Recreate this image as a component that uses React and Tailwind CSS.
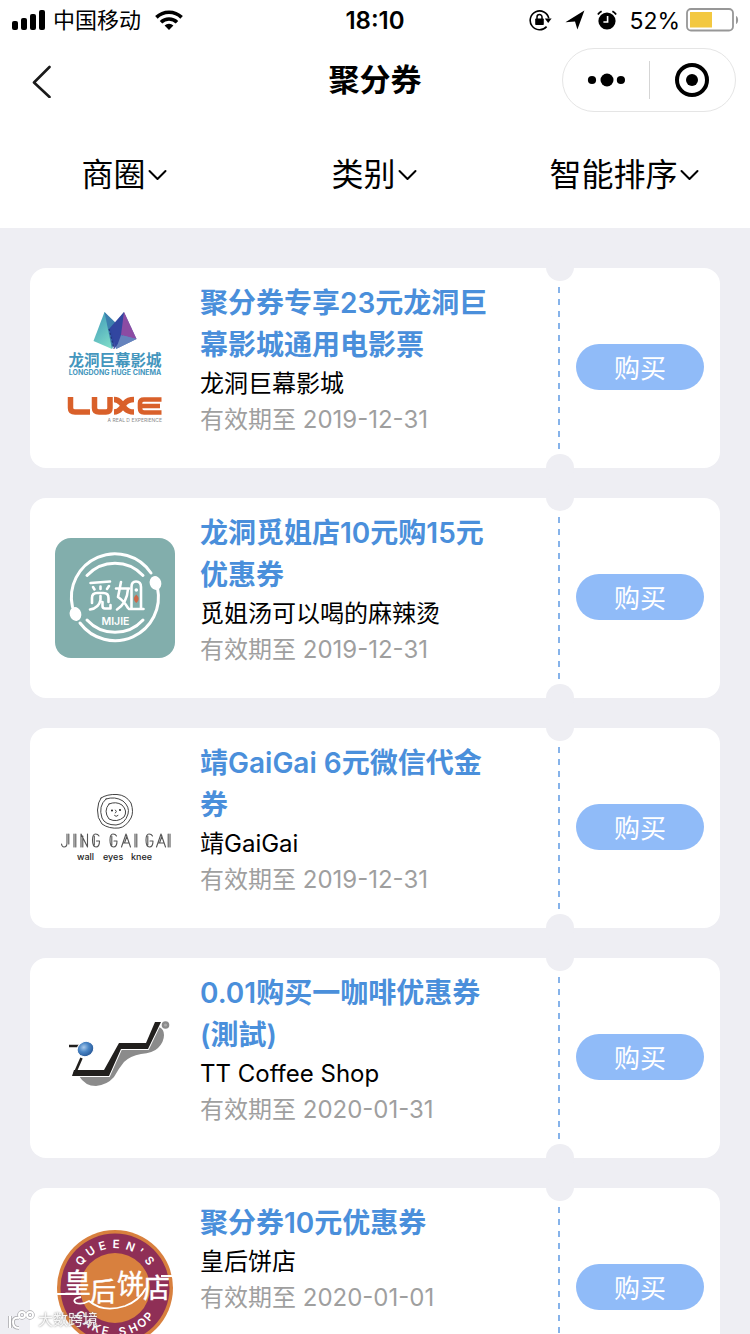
import React from "react";

function SignalIcon() {
  return (
    <svg width="34" height="20" viewBox="0 0 34 20" aria-hidden="true">
      <rect x="0" y="11" width="6" height="9" rx="2" />
      <rect x="9" y="8" width="6" height="12" rx="2" />
      <rect x="18" y="4" width="6" height="16" rx="2" />
      <rect x="27" y="0" width="6" height="20" rx="2" />
    </svg>
  );
}

function WifiIcon() {
  return (
    <svg width="28" height="20" viewBox="0 0 28 20" aria-hidden="true">
      <g fill="none" stroke="#000" strokeWidth="3.6">
        <path d="M1.4 7.4 A18 18 0 0 1 26.6 7.4" />
        <path d="M6 12.2 A11.5 11.5 0 0 1 22 12.2" />
      </g>
      <path d="M9.6 15.6 A6.2 6.2 0 0 1 18.4 15.6 L14 20 Z" />
    </svg>
  );
}

function RotationLockIcon() {
  return (
    <svg width="24" height="22" viewBox="0 0 24 22" aria-hidden="true">
      <path d="M17.6 17.6 A9.4 9.4 0 1 1 19.8 9.4" fill="none" stroke="#000" strokeWidth="1.6" />
      <path d="M15.8 9.4 H22.6 L19.2 14 Z" />
      <rect x="6.2" y="9.4" width="8.6" height="6.6" rx="0.8" />
      <path d="M8 10 V8 A2.5 2.5 0 0 1 13 8 V10" fill="none" stroke="#000" strokeWidth="1.5" />
    </svg>
  );
}

function LocationIcon() {
  return (
    <svg width="20" height="20" viewBox="0 0 20 20" aria-hidden="true">
      <path d="M19.4 0.6 L0.4 12.2 L10 11.6 L12.4 19.4 Z" />
    </svg>
  );
}

function AlarmIcon() {
  return (
    <svg width="20" height="20" viewBox="0 0 20 20" aria-hidden="true">
      <circle cx="10" cy="11" r="8.6" />
      <path d="M0.9 4.6 A11 11 0 0 1 4.6 1.3 M15.4 1.3 A11 11 0 0 1 19.1 4.6" fill="none" stroke="#000" strokeWidth="1.8" />
      <path d="M10.6 6 V12 H6.4" fill="none" stroke="#fff" strokeWidth="1.6" />
    </svg>
  );
}

function BatteryIcon() {
  return (
    <svg width="54" height="24" viewBox="0 0 54 24" aria-hidden="true">
      <rect x="1" y="1" width="46" height="21.5" rx="4" fill="#fff" stroke="#979797" strokeWidth="1.8" />
      <rect x="4" y="4" width="22" height="15.5" fill="#f3c840" />
      <path d="M50 8 C52.8 8.6 52.8 15.4 50 16 Z" fill="#979797" />
    </svg>
  );
}

function StatusBar() {
  return (
    <div className="grid h-10 grid-cols-[1fr_auto_1fr] items-center">
      <div className="flex items-center pl-3">
        <SignalIcon />
        <span className="mr-3.5 ml-[7px] text-[22px] leading-7">中国移动</span>
        <WifiIcon />
      </div>
      <span className="pt-0.5 text-2xl leading-7 font-semibold">18:10</span>
      <div className="flex items-center justify-end gap-3 pr-2.5">
        <RotationLockIcon />
        <LocationIcon />
        <AlarmIcon />
        <div className="flex items-center gap-1.5">
          <span className="pt-0.5 text-[23px] leading-7">52%</span>
          <BatteryIcon />
        </div>
      </div>
    </div>
  );
}

function NavBar() {
  return (
    <div className="grid h-20 grid-cols-[1fr_auto_1fr] items-center">
      <button type="button" aria-label="返回" className="ml-8 w-5">
        <svg width="20" height="36" viewBox="0 0 20 36" fill="none" aria-hidden="true">
          <path d="M17.5 6 L2 21.500 L17.5 36" transform="translate(0 -1)" stroke="#1a1a1a" strokeWidth="2.6" strokeLinecap="round" strokeLinejoin="round" />
        </svg>
      </button>
      <h1 className="text-[31px] leading-10 font-bold">聚分券</h1>
      <div className="mr-3.5 flex h-16 w-[174px] items-center justify-self-end rounded-full border border-[#e5e5e5]">
        <button type="button" aria-label="更多" className="flex flex-1 justify-center">
          <svg width="38" height="14" viewBox="0 0 38 14" aria-hidden="true">
            <circle cx="5" cy="7" r="4.1" />
            <circle cx="20" cy="7" r="6.5" />
            <circle cx="33.900" cy="7" r="4.1" />
          </svg>
        </button>
        <span className="h-[38px] w-px bg-[#d5d5d5]" />
        <button type="button" aria-label="关闭" className="flex flex-1 justify-center">
          <svg width="36" height="36" viewBox="0 0 36 36" aria-hidden="true">
            <circle cx="18" cy="18" r="15" fill="none" stroke="#000" strokeWidth="4" />
            <circle cx="18" cy="18" r="6" />
          </svg>
        </button>
      </div>
    </div>
  );
}

function Filters() {
  return (
    <div className="grid h-[108px] grid-cols-3 pt-0.5">
      {["商圈", "类别", "智能排序"].map((label) => (
        <button key={label} type="button" className="flex items-center justify-center gap-0.5 pr-0.5 text-[32px]">
          {label}
          <svg width="19" height="12" viewBox="0 0 19 12" fill="none" aria-hidden="true">
            <path d="M1.500 2 L9.500 10 L17.500 2" stroke="#000" strokeWidth="2" strokeLinecap="round" strokeLinejoin="round" />
          </svg>
        </button>
      ))}
    </div>
  );
}

function CinemaLogo() {
  return (
    <svg width="120" height="120" viewBox="0 10 120 120" role="img" aria-label="龙洞巨幕影城">
      <defs>
        <linearGradient id="peakLeft" x1="0" y1="0" x2="0.6" y2="1">
          <stop offset="0" stopColor="#3c96b8" />
          <stop offset="1" stopColor="#7fdcc8" />
        </linearGradient>
      </defs>
      <path d="M49.5 14 L38.5 43 L57 51 L63 30 Z" fill="url(#peakLeft)" />
      <path d="M49.5 14 L64 28 L57 51 Z" fill="#3d7fae" />
      <path d="M69 14 L81.5 41 L61 51 L56 30 Z" fill="#6583bd" />
      <path d="M69 14 L54 31 L59 51 L68 40 Z" fill="#2c3f9c" opacity="0.9" />
      <path d="M69 14 L66 37 L81.5 41 Z" fill="#8c4ba3" />
      <path d="M66 37 L81.5 41 L61 51 Z" fill="#6583bd" />
      <path d="M54 31 L59 51" stroke="#1f2d70" strokeDasharray="2 2" />
      <text x="60" y="68" textAnchor="middle" fontSize="15.5" fontWeight="700" fill="#4496bd">龙洞巨幕影城</text>
      <text x="60" y="77" textAnchor="middle" fontSize="7" fontWeight="700" fill="#4496bd">LONGDONG HUGE CINEMA</text>
      <g fill="none" stroke="#d9602a" strokeWidth="5.5" strokeLinejoin="round">
        <path d="M15.500 99 V110 Q15.500 114 20 114 H35" />
        <path d="M39.500 99 V110 Q39.500 114 44 114 H51 Q55 114 55 110 V99" />
        <path d="M59 101.500 Q63 101.500 66 105 L70 110.500 Q73 114 79 114 M59 114 Q63 114 66 110.500 L70 105 Q73 101.500 79 101.500" />
        <path d="M106.500 101.500 H89 Q85 101.500 85 105 V110 Q85 114.500 89 114.500 H106.500 M85 108 H105" strokeWidth="4.6" />
      </g>
      <text x="107" y="124" textAnchor="end" fontSize="5" fill="#8a8a8a">A REAL D EXPERIENCE</text>
    </svg>
  );
}

function MijieLogo() {
  return (
    <svg width="120" height="120" viewBox="0 0 120 120" role="img" aria-label="觅姐 MIJIE" className="rounded-2xl bg-[#82aeac]">
      <g fill="none" stroke="#fff" strokeWidth="3" strokeLinecap="round">
        <path d="M96 35 A43.500 43.500 0 0 0 17.500 69" />
        <path d="M25 85 A43.500 43.500 0 0 0 102.500 50" />
        <path d="M32 37.500 A38 38 0 0 1 88 37.500" />
        <path d="M32 82 A38 38 0 0 0 88 82" />
      </g>
      <ellipse cx="100.500" cy="45" rx="5.800" ry="7" fill="#fff" transform="rotate(-15 100.500 45)" />
      <ellipse cx="20.500" cy="76" rx="5.800" ry="7" fill="#fff" transform="rotate(-15 20.500 76)" />
      <g fill="none" stroke="#fff" strokeWidth="2.600" strokeLinecap="round" strokeLinejoin="round">
        <path d="M35.500 45 L55 43.500 M38 49 L39.500 51.500 M45.500 48.500 V51 M54 48 L52 51" />
        <path d="M37 65 V60 Q37 55 42 55 H48.500 Q53.500 55 53.500 60 V64 M45.500 58 V62 Q44 70 35 71.500 M47.500 64 V68 Q47.500 70.500 50 70.500 H55.500 V67" />
        <path d="M66 44 L63 59 Q69 63 73 70 M73 51 Q72 65 62 71.500 M61 50.500 H74" />
        <path d="M76.500 71 V49 Q76.500 43.500 81 43.500 Q86 43.500 86 49 V71 M74 71 H88.500" />
      </g>
      <circle cx="81.300" cy="52" r="1.800" fill="#fff" />
      <path d="M81.300 56.500 Q86 61 81.300 65 Q76.500 61 81.300 56.500" fill="#ce6748" />
      <text x="60.500" y="87" textAnchor="middle" fontSize="10.500" fontWeight="600" fill="#fff">MIJIE</text>
    </svg>
  );
}

function JingLogo() {
  return (
    <svg width="120" height="120" viewBox="0 0 120 120" role="img" aria-label="JING GAI GAI wall eyes knee">
      <g fill="none" stroke="#444" strokeWidth="1" strokeLinecap="round" strokeLinejoin="round">
        <path d="M46 30 Q52 26 62 26.500 Q71 27 76 35 Q79 44 76 50 Q71 59 64 60 Q54 61 47 56 Q42 50 42.500 42 Q43 34 46 30 Z" />
        <path d="M51 31 Q60 28 68 33 Q75 39 73 46 Q70 56 61 57 Q50 57 47 50 Q43 38 51 31 Z" />
        <path d="M54 36 Q61 33 67 37 Q73 43 69 49 Q62 55 54 51 Q48 43 54 36 Z" />
        <path d="M60.500 42 Q62.500 43.500 60.500 45 M59.500 47.500 Q61 49.500 63 47.500" />
      </g>
      <circle cx="57" cy="42.500" r="0.900" />
      <circle cx="65" cy="42" r="0.900" />
      <g fill="none" stroke="#555" strokeWidth="1.100" strokeLinecap="round" strokeLinejoin="round">
        <path d="M12 66 V75 Q12 79 9 79 Q7 79 6.500 76 M13.800 66 V76" />
        <path d="M19 66 V79 M20.800 66 V79 M26 79 V66 L32.500 79 V66 M27.800 68 V79" />
        <path d="M44 68 Q43 66 40.500 66 Q37.500 66 37.500 72 Q37.500 79 41 79 Q44.500 79 44.500 73 H41.500 M39.300 68 V77" />
        <path d="M61.500 68 Q60.500 66 58 66 Q55 66 55 72 Q55 79 58.500 79 Q62 79 62 73 H59 M56.800 68 V77" />
        <path d="M66.500 79 L71 66 L75.500 79 M68.500 75 H74 M69.500 75 L72 68 M80 66 V79 M81.800 66 V79" />
        <path d="M97.500 68 Q96.500 66 94 66 Q91 66 91 72 Q91 79 94.500 79 Q98 79 98 73 H95 M92.800 68 V77" />
        <path d="M101.500 79 L106 66 L110.500 79 M103.500 75 H109 M104.500 75 L107 68 M113.200 66 V79 M115 66 V79" />
      </g>
      <g fontSize="9" fontWeight="500" fill="#222">
        <text x="22" y="92">wall</text>
        <text x="48" y="92">eyes</text>
        <text x="76" y="92">knee</text>
      </g>
    </svg>
  );
}

function CoffeeLogo() {
  return (
    <svg width="120" height="120" viewBox="0 0 120 120" role="img" aria-label="TT Coffee Shop">
      <defs>
        <radialGradient id="bead" cx="0.45" cy="0.35" r="0.6">
          <stop offset="0" stopColor="#a9c9ea" />
          <stop offset="0.5" stopColor="#4a86c6" />
          <stop offset="1" stopColor="#2a5c9c" />
        </radialGradient>
      </defs>
      <path d="M24 78 Q30 88 41 88 Q52 87 59 79 Q64 70 69 64 Q75 58 86 56 Q98 55 103 50 Q109 44 109 37 Q109 31 104 29 L92 51 L66 51 L54 78 Z" fill="#8b8b8b" />
      <path d="M17 78 L19 72 H49 L64 45 H91 L100 24 H106 L93 51 H66 L54 78 Z" fill="#211f1d" stroke="#fff" strokeWidth="2" />
      <path d="M17 78 L19 72 H49 L64 45 H91 L100 24 H106 L93 51 H66 L54 78 Z" fill="#211f1d" />
      <path d="M26.500 60 L19 77" stroke="#211f1d" strokeWidth="2.600" />
      <path d="M14 48 H25" stroke="#211f1d" strokeWidth="2.500" />
      <ellipse cx="30.500" cy="51" rx="8.500" ry="7.500" fill="url(#bead)" stroke="#fff" strokeWidth="1" transform="rotate(-25 30.500 51)" />
      <circle cx="110.500" cy="27" r="3.800" fill="#8b8b8b" />
      <circle cx="110.500" cy="27" r="1.500" fill="#aaa" />
    </svg>
  );
}

// Places glyphs round the badge: `side` is -1 for the upper arc and 1 for the lower one.
function ringLetters(angles, radius, side) {
  const half = 4;
  const points = angles.map((deg) => {
    const a = (deg * Math.PI) / 180;
    return {
      x: 60 + radius * Math.sin(a) - half * Math.cos(a),
      y: 60 + side * radius * Math.cos(a) + side * half * Math.sin(a),
      r: -side * deg,
    };
  });
  return {
    x: points.map((p) => p.x.toFixed(1)).join(" "),
    y: points.map((p) => p.y.toFixed(1)).join(" "),
    rotate: points.map((p) => p.r).join(" "),
  };
}

function QueensLogo() {
  return (
    <svg width="120" height="120" viewBox="0 0 120 120" role="img" aria-label="皇后饼店 QUEEN'S CAKE SHOP" className="overflow-visible">
      <circle cx="60" cy="60" r="58" fill="#d8803e" />
      <circle cx="60" cy="60" r="54.500" fill="#8f2f56" />
      <circle cx="60" cy="60" r="35" fill="#d8803e" />
      <g fill="#fff" fontSize="11.500" fontWeight="600">
        <text {...ringLetters([-52, -34, -16, 2, 20, 38, 52], 40, -1)}>QUEEN'S</text>
        <text {...ringLetters([-52, -38, -25, -12, 0, 10, 24, 37, 50], 48, 1)}>CAKE SHOP</text>
      </g>
      <g fill="#fff" stroke="#fff" strokeWidth="0.5" fontWeight="400">
        <text x="9" y="65" fontSize="27">皇</text>
        <text x="35" y="73" fontSize="26">后</text>
        <text x="62" y="66" fontSize="27">饼</text>
        <text x="88" y="70" fontSize="27">店</text>
      </g>
      <path d="M0 66 H24 M26 69 Q16 71 21 75 Q27 77 34 73 Q48 85 70 78 Q84 73 91 60 M106 48 H118" fill="none" stroke="#fff" strokeWidth="1.800" />
    </svg>
  );
}

const coupons = [
  { Logo: CinemaLogo, title: "聚分券专享23元龙洞巨幕影城通用电影票", shop: "龙洞巨幕影城", date: "2019-12-31" },
  { Logo: MijieLogo, title: "龙洞觅姐店10元购15元优惠券", shop: "觅姐汤可以喝的麻辣烫", date: "2019-12-31" },
  { Logo: JingLogo, title: "靖GaiGai 6元微信代金券", shop: "靖GaiGai", date: "2019-12-31" },
  { Logo: CoffeeLogo, title: "0.01购买一咖啡优惠券(測試)", shop: "TT Coffee Shop", date: "2020-01-31" },
  { Logo: QueensLogo, title: "聚分券10元优惠券", shop: "皇后饼店", date: "2020-01-01" },
];

function CouponCard({ coupon }) {
  const { Logo, title, shop, date } = coupon;
  return (
    <li className="flex min-h-[200px] rounded-2xl bg-white">
      <div className="flex shrink-0 items-center px-[25px]">
        <Logo />
      </div>
      <div className="min-w-0 flex-1 pt-3.5">
        <h2 className="max-w-[300px] text-[28px] leading-[42px] font-semibold text-[#4a8fdb]">{title}</h2>
        <p className="text-2xl leading-9">{shop}</p>
        <p className="text-2xl leading-9 text-[#9f9f9f]">有效期至 {date}</p>
      </div>
      <div className="relative flex w-0.5 shrink-0 py-[19px]">
        <span className="absolute -top-[15px] -left-3 size-7 rounded-full bg-[#eeeef3]" />
        <span className="w-0.5 bg-[repeating-linear-gradient(to_bottom,#86b3ea_0px,#86b3ea_6px,transparent_6px,transparent_12px)]" />
        <span className="absolute -bottom-3.5 -left-3 size-7 rounded-full bg-[#eeeef3]" />
      </div>
      <div className="flex w-40 shrink-0 items-center justify-center pb-0.5">
        <button type="button" className="h-[46px] w-32 rounded-full bg-[#90bbf8] pt-1 text-[26px] leading-10 text-white">
          购买
        </button>
      </div>
    </li>
  );
}

export default function App() {
  return (
    <div
      lang="zh-CN"
      className="h-screen overflow-y-auto bg-[#eeeef3] font-['Inter','Noto_Sans_CJK_SC',sans-serif] text-black [scrollbar-width:none]"
    >
      <header className="bg-white">
        <StatusBar />
        <NavBar />
        <Filters />
      </header>
      <main className="px-[30px] py-10">
        <ul className="flex flex-col gap-[30px]">
          {coupons.map((coupon) => (
            <CouponCard key={coupon.title} coupon={coupon} />
          ))}
        </ul>
      </main>
      <div className="pointer-events-none fixed bottom-1 left-2 flex items-center gap-0.5 text-white/90">
        <svg width="28" height="20" viewBox="0 0 28 20" fill="none" aria-hidden="true">
          <g stroke="#a8a8ac" strokeWidth="3.500">
            <path d="M2 6 V18 M11 8 Q5 7 5 12 Q5 18 11 18" />
            <circle cx="14" cy="5" r="3" />
            <circle cx="22" cy="5" r="3" />
          </g>
          <g stroke="#fff" strokeWidth="2">
            <path d="M2 6 V18 M11 8 Q5 7 5 12 Q5 18 11 18" />
            <circle cx="14" cy="5" r="3" />
            <circle cx="22" cy="5" r="3" />
          </g>
        </svg>
        <span className="text-[15px] leading-5 [text-shadow:0_0_2px_#777]">大数跨境</span>
      </div>
    </div>
  );
}
